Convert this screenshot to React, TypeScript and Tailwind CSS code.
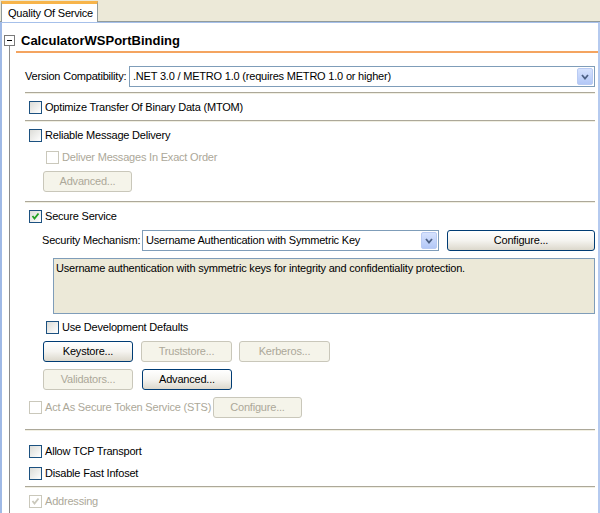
import React from "react"

const font = "font-['Liberation_Sans',Arial,sans-serif] tracking-[-0.2px]"

function Check({ checked, disabled }: { checked?: boolean; disabled?: boolean }) {
  return (
    <div
      className={
        "w-[13px] h-[13px] shrink-0 border flex items-center justify-center " +
        (disabled ? "border-[#cac8bb] bg-white" : "border-[#1c5180] bg-gradient-to-br from-[#dcdcd7] to-white")
      }
    >
      {checked && (
        <svg width="9" height="9" viewBox="0 0 9 9">
          <polyline
            points="1.5,4 3.5,6.5 7.5,1.5"
            fill="none"
            stroke={disabled ? "#cac8bb" : "#21a121"}
            strokeWidth="1.8"
          />
        </svg>
      )}
    </div>
  )
}

function CheckRow({
  label,
  checked,
  disabled,
  className = "",
}: {
  label: string
  checked?: boolean
  disabled?: boolean
  className?: string
}) {
  return (
    <div className={"flex items-center gap-[3px] h-[13px] " + className}>
      <Check checked={checked} disabled={disabled} />
      <span
        className={
          "text-[11px] leading-[13px] whitespace-nowrap " + (disabled ? "text-[#aca899]" : "text-black")
        }
      >
        {label}
      </span>
    </div>
  )
}

function Btn({ label, disabled, className = "" }: { label: string; disabled?: boolean; className?: string }) {
  return (
    <div
      className={
        "h-[21px] rounded-[3px] border flex items-center justify-center text-[11px] whitespace-nowrap shrink-0 " +
        (disabled
          ? "border-[#c9c7ba] bg-[#f5f4ea] text-[#aca899]"
          : "border-[#003c74] bg-gradient-to-b from-white via-[#f5f4f0] to-[#dcd8cc] text-black") +
        " " +
        className
      }
    >
      {label}
    </div>
  )
}

function Combo({ text, className = "" }: { text: string; className?: string }) {
  return (
    <div className={"h-[21px] border border-[#7f9db9] bg-white flex items-center " + className}>
      <span className="flex-1 pl-[3px] text-[11px] text-black truncate">{text}</span>
      <div className="w-[16px] h-[17px] mr-px rounded-[2px] border border-[#b9cbf3] bg-gradient-to-b from-[#d6e2fd] to-[#b3c8f7] flex items-center justify-center">
        <svg width="8" height="6" viewBox="0 0 8 6">
          <polyline points="1,1 4,4.5 7,1" fill="none" stroke="#4d6185" strokeWidth="1.8" />
        </svg>
      </div>
    </div>
  )
}

function Sep({ className = "" }: { className?: string }) {
  return <div className={"h-[2px] border-t border-[#aca899] border-b border-b-[#f1efe2] " + className} />
}

export default function App() {
  return (
    <div className={"w-[600px] h-[513px] overflow-hidden bg-white flex flex-col " + font}>
      {/* tab strip */}
      <div className="h-[22px] bg-[#ece9d8] flex items-end border-b border-[#919b9c] shrink-0">
        <div className="ml-px h-[21px] w-[97px] bg-white border-x border-[#919b9c] border-t-[3px] border-t-[#f7b44a] flex items-center pl-[6px] text-[11px] text-black whitespace-nowrap -mb-px">
          Quality Of Service
        </div>
      </div>

      {/* body */}
      <div className="flex-1 flex border-t border-[#a6c0ea] border-l-2 border-l-[#9fb9e6] border-r-2 border-r-[#b5caef] min-h-0">
        <div className="w-[14px] shrink-0 flex flex-col">
          <div className="mt-[12px] ml-[2px] w-[11px] h-[11px] border border-[#7a7a7a] bg-white flex items-center justify-center">
            <div className="w-[5px] h-px bg-black" />
          </div>
          <div className="flex-1 ml-[7px] w-px bg-[#8c8c8c]" />
        </div>

        <div className="flex-1 min-w-0 flex flex-col">
          <div className="pt-[10px] pb-[2px] pl-[5px] border-b-2 border-[#f4a460]">
            <div className="text-[13px] leading-[16px] font-bold text-black tracking-normal">CalculatorWSPortBinding</div>
          </div>

          <div className="pl-[9px] pr-[3px] flex flex-col">
            <div className="mt-[13px] flex items-center">
              <span className="text-[11px] text-black w-[104px] shrink-0 whitespace-nowrap">Version Compatibility:</span>
              <Combo text=".NET 3.0 / METRO 1.0 (requires METRO 1.0 or higher)" className="flex-1" />
            </div>

            <Sep className="mt-[5px]" />
            <CheckRow label="Optimize Transfer Of Binary Data (MTOM)" className="mt-[7px] ml-[4px]" />

            <Sep className="mt-[6px]" />
            <CheckRow label="Reliable Message Delivery" className="mt-[7px] ml-[4px]" />
            <CheckRow label="Deliver Messages In Exact Order" disabled className="mt-[9px] ml-[21px]" />
            <Btn label="Advanced..." disabled className="mt-[7px] ml-[18px] w-[89px]" />

            <Sep className="mt-[9px]" />
            <CheckRow label="Secure Service" checked className="mt-[7px] ml-[4px]" />

            <div className="mt-[7px] flex items-center">
              <span className="ml-[17px] w-[100px] shrink-0 whitespace-nowrap text-[11px] text-black">
                Security Mechanism:
              </span>
              <Combo text="Username Authentication with Symmetric Key" className="w-[297px] shrink-0" />
              <Btn label="Configure..." className="ml-[8px] flex-1" />
            </div>

            <div className="mt-[7px] ml-[28px] h-[56px] border border-[#7f9db9] bg-[#ece9d8] px-[2px] pt-[1px] text-[11px] text-black">
              Username authentication with symmetric keys for integrity and confidentiality protection.
            </div>

            <CheckRow label="Use Development Defaults" className="mt-[7px] ml-[21px]" />

            <div className="mt-[7px] ml-[18px] flex gap-[8px]">
              <Btn label="Keystore..." className="w-[90px]" />
              <Btn label="Truststore..." disabled className="w-[91px]" />
              <Btn label="Kerberos..." disabled className="w-[91px] -ml-px" />
            </div>
            <div className="mt-[7px] ml-[18px] flex gap-[9px]">
              <Btn label="Validators..." disabled className="w-[90px]" />
              <Btn label="Advanced..." className="w-[90px]" />
            </div>

            <div className="mt-[7px] flex items-center">
              <CheckRow label="Act As Secure Token Service (STS)" disabled className="ml-[4px] w-[180px]" />
              <Btn label="Configure..." disabled className="ml-[4px] w-[89px]" />
            </div>

            <Sep className="mt-[11px]" />
            <CheckRow label="Allow TCP Transport" className="mt-[14px] ml-[4px]" />
            <CheckRow label="Disable Fast Infoset" className="mt-[9px] ml-[4px]" />

            <Sep className="mt-[6px]" />
            <CheckRow label="Addressing" checked disabled className="mt-[7px] ml-[4px]" />
          </div>
        </div>
      </div>
    </div>
  )
}
